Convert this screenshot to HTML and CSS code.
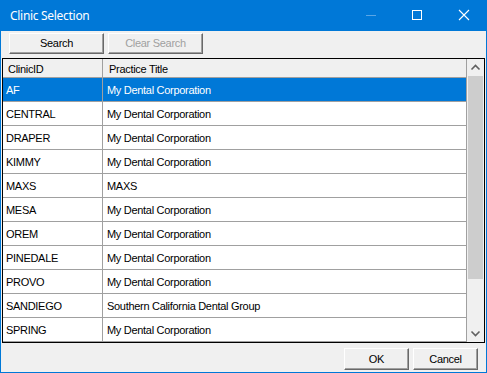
FILE: index.html
```html
<!DOCTYPE html>
<html lang="en">
<head>
  <meta charset="UTF-8">
  <title>Clinic Selection</title>
  <link rel="stylesheet" href="styles.css">
</head>
<body>
<div class="window">
  <div class="titlebar">
    <span class="title">Clinic Selection</span>
    <div class="controls">
      <span class="ctl">
        <svg width="46" height="30" viewBox="0 0 46 30"><path d="M17 15.5h10" stroke="#5aa6e6" stroke-width="1"/></svg>
      </span>
      <span class="ctl">
        <svg width="46" height="30" viewBox="0 0 46 30"><rect x="17.5" y="10.5" width="9" height="9" fill="none" stroke="#fff" stroke-width="1"/></svg>
      </span>
      <span class="ctl">
        <svg width="46" height="30" viewBox="0 0 46 30"><path d="M18 10l10 10M28 10l-10 10" stroke="#fff" stroke-width="1.1"/></svg>
      </span>
    </div>
  </div>

  <div class="toolbar">
    <button class="btn btn-wide">Search</button>
    <button class="btn btn-wide" disabled>Clear Search</button>
  </div>

  <div class="grid">
    <div class="table">
      <div class="row head">
        <div class="cell c1">ClinicID</div>
        <div class="cell c2">Practice Title</div>
      </div>
      <div class="row selected">
        <div class="cell c1">AF</div>
        <div class="cell c2">My Dental Corporation</div>
      </div>
      <div class="row">
        <div class="cell c1">CENTRAL</div>
        <div class="cell c2">My Dental Corporation</div>
      </div>
      <div class="row">
        <div class="cell c1">DRAPER</div>
        <div class="cell c2">My Dental Corporation</div>
      </div>
      <div class="row">
        <div class="cell c1">KIMMY</div>
        <div class="cell c2">My Dental Corporation</div>
      </div>
      <div class="row">
        <div class="cell c1">MAXS</div>
        <div class="cell c2">MAXS</div>
      </div>
      <div class="row">
        <div class="cell c1">MESA</div>
        <div class="cell c2">My Dental Corporation</div>
      </div>
      <div class="row">
        <div class="cell c1">OREM</div>
        <div class="cell c2">My Dental Corporation</div>
      </div>
      <div class="row">
        <div class="cell c1">PINEDALE</div>
        <div class="cell c2">My Dental Corporation</div>
      </div>
      <div class="row">
        <div class="cell c1">PROVO</div>
        <div class="cell c2">My Dental Corporation</div>
      </div>
      <div class="row">
        <div class="cell c1">SANDIEGO</div>
        <div class="cell c2">Southern California Dental Group</div>
      </div>
      <div class="row">
        <div class="cell c1">SPRING</div>
        <div class="cell c2">My Dental Corporation</div>
      </div>
    </div>
    <div class="scrollbar">
      <div class="arrow">
        <svg width="17" height="17" viewBox="0 0 17 17"><path d="M4.5 10.5l4-4 4 4" fill="none" stroke="#606060" stroke-width="1.6"/></svg>
      </div>
      <div class="track">
        <div class="thumb"></div>
      </div>
      <div class="arrow">
        <svg width="17" height="17" viewBox="0 0 17 17"><path d="M4.5 6.5l4 4 4-4" fill="none" stroke="#606060" stroke-width="1.6"/></svg>
      </div>
    </div>
  </div>

  <div class="footer">
    <button class="btn btn-small">OK</button>
    <button class="btn btn-small">Cancel</button>
  </div>
</div>
</body>
</html>
```

FILE: styles.css
```css
:root {
  --blue: #0078d7;
  --face: #f0f0f0;
  --line: #a0a0a0;
  --ui: "Liberation Sans", Arial, sans-serif;
}
html, body {
  margin: 0;
  padding: 0;
  background: #fff;
}
.window {
  width: 487px;
  height: 373px;
  box-sizing: border-box;
  border: 1px solid var(--blue);
  border-top: 0;
  background: var(--face);
  display: flex;
  flex-direction: column;
  font-family: var(--ui);
  font-size: 11px;
  letter-spacing: -0.3px;
  color: #000;
}
.titlebar {
  height: 31px;
  margin: 0 -1px;
  background: var(--blue);
  display: flex;
  align-items: center;
  justify-content: space-between;
}
.title {
  font-family: "Noto Sans", "Open Sans", sans-serif;
  font-size: 12px;
  letter-spacing: -0.3px;
  color: #fff;
  padding-left: 10px;
  margin-top: -1px;
}
.controls {
  display: flex;
  height: 30px;
  align-self: flex-start;
}
.ctl {
  width: 46px;
  height: 30px;
  display: block;
}
.ctl svg {
  display: block;
}
.toolbar {
  display: flex;
  gap: 4px;
  padding: 2px 0 0 8px;
  height: 21px;
}
.btn {
  box-sizing: border-box;
  font-family: var(--ui);
  font-size: 11px;
  letter-spacing: -0.3px;
  color: #000;
  background: var(--face);
  border: 1px solid;
  border-color: #fff #696969 #696969 #fff;
  box-shadow: inset -1px -1px 0 #a0a0a0;
  padding: 0 0 1px 0;
  margin: 0;
  height: 21px;
}
.btn:disabled {
  color: #a0a0a0;
}
.btn-wide {
  width: 95px;
}
.grid {
  margin: 4px 1px 0 1px;
  height: 285px;
  box-sizing: border-box;
  border: 1px solid #000;
  background: #fff;
  display: flex;
}
.table {
  flex: 1;
  border-right: 1px solid var(--line);
}
.row {
  display: flex;
  height: 23px;
  border-bottom: 1px solid var(--line);
  align-items: center;
}
.row.head {
  height: 18px;
  background: var(--face);
}
.row.selected {
  background: var(--blue);
  color: #fff;
}
.cell {
  white-space: nowrap;
  box-sizing: border-box;
  height: 100%;
  display: flex;
  align-items: center;
}
.c1 {
  width: 100px;
  padding-left: 3px;
  border-right: 1px solid var(--line);
}
.c2 {
  flex: 1;
  padding-left: 4px;
}
.head .cell {
  padding-top: 2px;
}
.head .c1 {
  padding-left: 5px;
}
.head .c2 {
  padding-left: 6px;
}
.scrollbar {
  width: 17px;
  display: flex;
  flex-direction: column;
  background: var(--face);
}
.arrow {
  height: 17px;
}
.arrow svg {
  display: block;
}
.track {
  flex: 1;
}
.thumb {
  margin: 0 1px;
  height: 203px;
  background: #cdcdcd;
}
.footer {
  display: flex;
  justify-content: flex-end;
  gap: 4px;
  padding: 5px 8px 0 0;
}
.btn-small {
  width: 65px;
  height: 22px;
}
```
